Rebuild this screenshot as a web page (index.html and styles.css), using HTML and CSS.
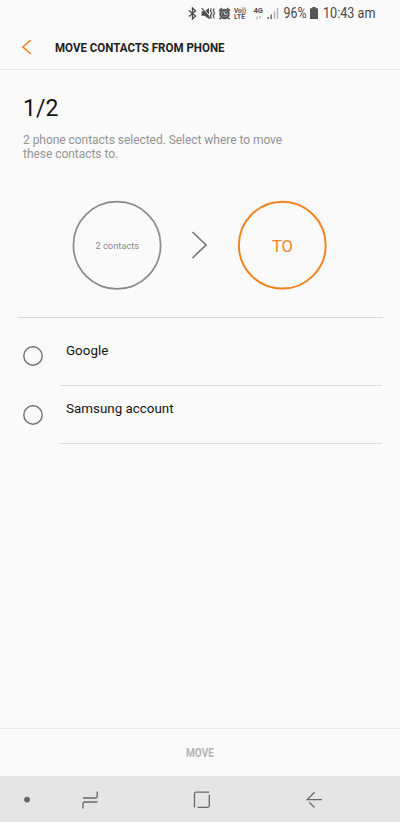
FILE: index.html
```html
<!DOCTYPE html>
<html lang="en">
<head>
<meta charset="utf-8">
<title>Move contacts from phone</title>
<link rel="stylesheet" href="styles.css">
</head>
<body>
<div class="status">
  <svg class="bt" width="9" height="13" viewBox="0 0 9 13"><path d="M1 3.4 7.6 9 4.5 12V1L7.6 4 1 9.6" fill="none" stroke="#4c4c4c" stroke-width="1.3"/></svg>
  <svg class="mute" width="15" height="13" viewBox="0 0 15 13"><path d="M.5 4.2h3L8 1v11L3.5 8.8h-3z" fill="#505050"/><path d="M1.6.6 10 10.4" stroke="#fafafa" stroke-width="1"/><path d="M.8 1.2 9.4 11.6M10.3 1.5 9.3 3.8l1.5 2.4-1.4 2.4 1 2.8M13.2 1.5l-1 2.3 1.4 2.4-1.4 2.4 1 2.8" fill="none" stroke="#505050" stroke-width="1.2"/></svg>
  <svg class="alarm" width="13" height="13" viewBox="0 0 13 13"><circle cx="6.5" cy="7" r="5.2" fill="#505050"/><path d="M1 4 4 1.2M12 4 9 1.2M2.8 10.7l-1.3 1.5M10.2 10.7l1.3 1.5" stroke="#505050" stroke-width="1.7"/><circle cx="6.5" cy="7" r="3.1" fill="none" stroke="#aaa" stroke-width=".7"/><path d="M6.3 4.8v2.5H9" fill="none" stroke="#ddd"/></svg>
  <svg class="volte" width="14" height="13" viewBox="0 0 14 13"><g class="tiny"><text x="1" y="5.8" textLength="12">Vo))</text><text x="1" y="12.3" textLength="11">LTE</text></g></svg>
  <svg class="net" width="11" height="13" viewBox="0 0 11 13"><text class="tiny" x=".5" y="6.4" textLength="9.5" lengthAdjust="spacingAndGlyphs">4G</text><path d="M4 9v3M3 11l1 1 1-1M7 12V9M6 10l1-1 1 1" fill="none" stroke="#aaa" stroke-width=".7"/></svg>
  <svg class="signal" width="12" height="13" viewBox="0 0 12 13"><path d="M1.2 10v2M4.2 7.5V12" stroke="#555" stroke-width="1.3"/><path d="M7.5 4.5V12M10.5 1v11" stroke="#b4b4b4" stroke-width="1.5"/></svg>
  <svg class="pct" width="24" height="20" viewBox="0 0 24 20"><text class="clock" x="-.5" y="15" textLength="23" lengthAdjust="spacingAndGlyphs">96%</text></svg>
  <svg class="battery" width="8" height="12" viewBox="0 0 8 12"><path d="M2.3 0h3.4v1.2H8V12H0V1.2h2.3z" fill="#555"/></svg>
  <svg class="time" width="54" height="20" viewBox="0 0 54 20"><text class="clock" x="-1" y="15" textLength="52.5" lengthAdjust="spacingAndGlyphs">10:43 am</text></svg>
</div>
<header class="bar">
  <svg class="back" width="12" height="18" viewBox="0 0 12 18"><path d="M9.8 2 1.9 9l7.9 7" fill="none" stroke="#ee8224" stroke-width="1.6"/></svg>
  <svg width="172" height="20" viewBox="0 0 172 20"><text class="title" x="0" y="15" textLength="169.5" lengthAdjust="spacingAndGlyphs">MOVE CONTACTS FROM PHONE</text></svg>
</header>
<main>
  <h1>1/2</h1>
  <p>2 phone contacts selected. Select where to move<br>these contacts to.</p>
  <div class="transfer">
    <svg class="circle" width="89" height="89" viewBox="0 0 89 89"><circle cx="44" cy="44.2" r="43.6" fill="none" stroke="#8a8a8a" stroke-width="1.7"/><text class="from" x="44.3" y="47.5" text-anchor="middle">2 contacts</text></svg>
    <svg class="chevron" width="18" height="30" viewBox="0 0 18 30"><path d="M1.5 2 15 15 1.5 28" fill="none" stroke="#777" stroke-width="1.7"/></svg>
    <svg class="circle" width="89" height="89" viewBox="0 0 89 89"><circle cx="44.3" cy="44.2" r="43.4" fill="none" stroke="#f28420" stroke-width="2"/><text class="to" x="44.5" y="50.5" text-anchor="middle">TO</text></svg>
  </div>
  <ul>
    <li><svg width="20" height="20" viewBox="0 0 20 20"><circle cx="10" cy="10" r="9.2" fill="none" stroke="#707070" stroke-width="1.4"/></svg><span class="name">Google</span></li>
    <li><svg width="20" height="20" viewBox="0 0 20 20"><circle cx="10" cy="10" r="9.2" fill="none" stroke="#707070" stroke-width="1.4"/></svg><span class="name">Samsung account</span></li>
  </ul>
</main>
<footer><svg width="30" height="20" viewBox="0 0 30 20"><text class="move" x="1" y="13.5" textLength="28" lengthAdjust="spacingAndGlyphs">MOVE</text></svg></footer>
<nav>
  <svg class="dot" width="6" height="6" viewBox="0 0 6 6"><circle cx="3" cy="2.6" r="2.9" fill="#666"/></svg>
  <svg class="recent" width="18" height="18" viewBox="0 0 18 18"><path d="M15.2.5V5q0 2-2 2H1M1 17.5V13q0-2 2-2h12.5" fill="none" stroke="#686868" stroke-width="1.3"/></svg>
  <svg class="home" width="18" height="18" viewBox="0 0 18 18"><path d="M1.5 16.5V3q0-1.8 1.8-1.8h13M16.3 3.8V14.5q0 1.8-1.8 1.8H4.5" fill="none" stroke="#686868" stroke-width="1.3"/></svg>
  <svg class="prev" width="18" height="18" viewBox="0 0 18 18"><path d="M8.5 1.2 1.3 8.6H16M3.2 11.3l5.3 5.2" fill="none" stroke="#686868" stroke-width="1.3"/></svg>
</nav>
</body>
</html>
```
FILE: styles.css
```css
* { box-sizing: border-box; }
body { margin: 0; width: 400px; height: 822px; display: flex; flex-direction: column; background: #fafafa; font-family: Roboto, "Liberation Sans", sans-serif; color: #141414; overflow: hidden; }
svg { display: block; flex: none; overflow: visible; }
.status { height: 26px; display: flex; align-items: center; padding: 0 0 0 188px; }
.mute { margin-left: 4px; }
.alarm { margin-left: 2px; }
.volte { margin-left: 2px; }
.net { margin-left: 6px; }
.signal { margin-left: 3px; }
.pct { margin-left: 5px; }
.battery { margin-left: 2px; }
.time { margin-left: 6px; }
.tiny { font: 700 6.5px Roboto, sans-serif; fill: #505050; }
.clock { font-size: 14.5px; fill: #484848; }
.bar { height: 44px; display: flex; align-items: center; border-bottom: 1px solid #e4e4e4; padding: 0 0 2px 21px; }
.bar .back { margin-right: 22px; }
.title { font-size: 13.4px; font-weight: 700; fill: #222; }
main { flex: 1; }
h1 { margin: 25px 0 0 23px; font-size: 23px; line-height: 28px; font-weight: 400; }
p { margin: 10px 0 0 23px; font-size: 12px; line-height: 14px; letter-spacing: -.04px; color: #949494; white-space: nowrap; }
.transfer { height: 157px; margin: 0 17px 0 18px; border-bottom: 1px solid #dadada; display: flex; align-items: center; padding: 12px 0 0 55px; }
.from { fill: #888; font-size: 9.3px; }
.to { fill: #f28420; font-size: 16.5px; }
.chevron { margin: 0 29px; }
ul { margin: 0; padding: 9px 0 0; list-style: none; }
li { height: 58.5px; display: flex; align-items: center; padding-left: 23px; }
.name { height: 58.5px; width: 322px; margin-left: 17px; padding: 14.5px 0 0 6px; font-size: 13.4px; line-height: 18px; border-bottom: 1px solid #dcdcdc; }
footer { height: 48px; border-top: 1px solid #e9e9e9; display: flex; align-items: center; justify-content: center; }
.move { font-size: 12px; font-weight: 700; fill: #b5b5b5; }
nav { height: 46px; background: #e5e5e5; display: flex; align-items: center; padding: 2px 0 0 24px; }
.recent { margin-left: 52px; }
.home { margin-left: 93px; }
.prev { margin-left: 95px; }
```
